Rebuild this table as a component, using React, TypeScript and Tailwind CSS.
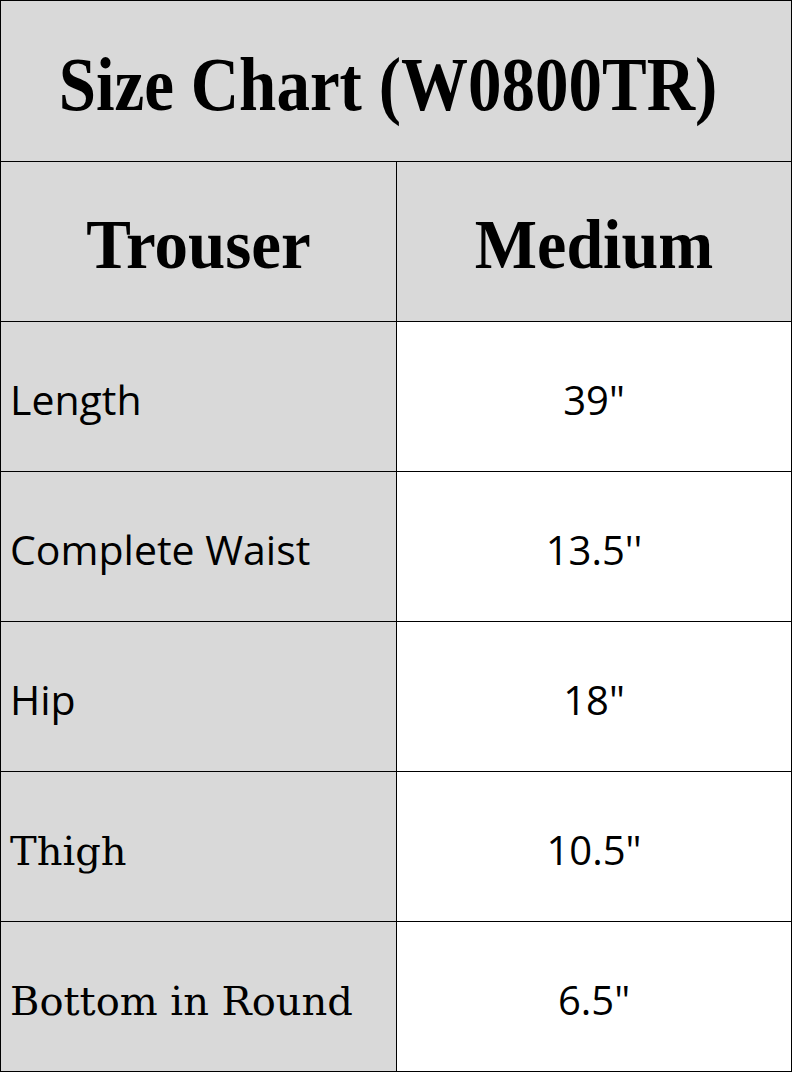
import React from 'react';

type Row = { label: string; value: string; serif?: boolean };

const rows: Row[] = [
    { label: 'Length', value: '39"' },
    { label: 'Complete Waist', value: "13.5''" },
    { label: 'Hip', value: '18"' },
    { label: 'Thigh', value: '10.5"', serif: true },
    { label: 'Bottom in Round', value: '6.5"', serif: true },
];

const App: React.FC = () => {
    return (
        <div className="w-[792px] h-[1072px] bg-white">
            <div className="w-[792px] h-[1072px] border border-black flex flex-col text-black">
                {/* Title */}
                <div className="h-[161px] shrink-0 border-b border-black bg-[#d9d9d9] flex items-center justify-center pr-[16px]">
                    <h1 className="font-['Liberation_Serif',serif] font-bold text-[67px] leading-none pt-[4px] scale-y-115">
                        Size Chart (W0800TR)
                    </h1>
                </div>

                {/* Header */}
                <div className="h-[160px] shrink-0 border-b border-black grid grid-cols-[396px_1fr] bg-[#d9d9d9]">
                    <div className="border-r border-black flex items-center justify-center">
                        <span className="font-['Liberation_Serif',serif] font-bold text-[67px] leading-none pt-[6px] scale-y-105">Trouser</span>
                    </div>
                    <div className="flex items-center justify-center">
                        <span className="font-['Liberation_Serif',serif] font-bold text-[66px] leading-none pt-[6px] scale-y-105">Medium</span>
                    </div>
                </div>

                {/* Rows */}
                {rows.map((row, i) => (
                    <div
                        key={row.label}
                        className={`shrink-0 grid grid-cols-[396px_1fr] ${i < rows.length - 1 ? 'h-[150px] border-b border-black' : 'h-[149px]'}`}
                    >
                        <div className="border-r border-black bg-[#d9d9d9] flex items-center pl-[9px]">
                            {row.serif ? (
                                <span className="font-['DejaVu_Serif',serif] text-[40px] leading-none pt-[8px]">{row.label}</span>
                            ) : (
                                <span className="font-['Open_Sans',sans-serif] text-[41px] leading-none pt-[6px]">{row.label}</span>
                            )}
                        </div>
                        <div className="bg-white flex items-center justify-center">
                            <span className="font-['Open_Sans',sans-serif] text-[40px] leading-none pt-[6px]">{row.value}</span>
                        </div>
                    </div>
                ))}
            </div>
        </div>
    );
};

export default App;
